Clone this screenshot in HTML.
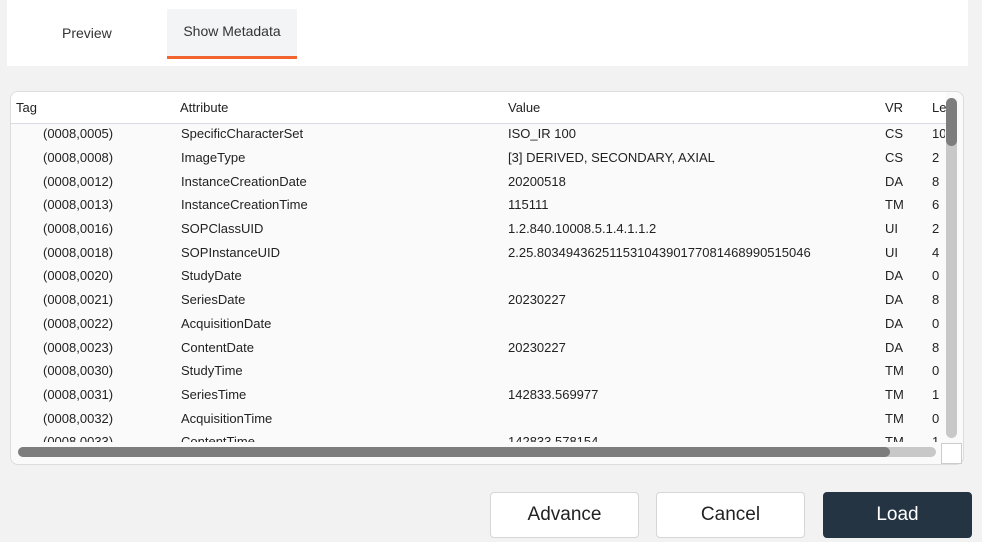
<!DOCTYPE html>
<html><head><style>
*{box-sizing:border-box;margin:0;padding:0}
body{width:982px;height:542px;background:#f2f2f2;font-family:"Liberation Sans",sans-serif;color:#222;position:relative;overflow:hidden}
.top{position:absolute;left:7px;top:0;width:961px;height:66px;background:#fff}
.tab{position:absolute;font-size:14px;color:#333}
.sm{left:160px;top:9px;width:130px;height:50px;background:#f3f4f6;border-bottom:3px solid #f26430;text-align:center;line-height:44px}
.box{position:absolute;left:10px;top:91px;width:954px;height:374px;background:#fafafa;border:1px solid #dcdcdc;border-radius:8px;overflow:hidden}
.hdr{position:absolute;left:0;top:0;width:935px;height:32px;background:#fff;border-bottom:1px solid #d8dce2}
.c{position:absolute;font-size:13px;white-space:nowrap}
.vs{position:absolute;left:935px;top:6px;width:11px;height:340px;background:#c8c8c8;border-radius:6px}
.vt{position:absolute;left:0;top:0;width:11px;height:48px;background:#7d7d7d;border-radius:6px}
.hs{position:absolute;left:7px;top:355px;width:918px;height:10px;background:#c8c8c8;border-radius:6px}
.ht{position:absolute;left:0;top:0;width:872px;height:10px;background:#7d7d7d;border-radius:6px}
.corner{position:absolute;left:930px;top:351px;width:21px;height:21px;background:#fff;border:1px solid #ccc}
.btn{position:absolute;top:492px;width:149px;height:46px;border-radius:4px;border:1px solid #d6d6d6;background:#fff;font-size:19px;text-align:center;line-height:44px;color:#222}
</style></head><body>
<div class="top">
<div class="tab" style="left:55px;top:25px">Preview</div>
<div class="tab sm">Show Metadata</div>
</div>
<div class="box">
<div class="hdr">
<div class="c" style="left:5px;top:8px">Tag</div>
<div class="c" style="left:169px;top:8px">Attribute</div>
<div class="c" style="left:497px;top:8px">Value</div>
<div class="c" style="left:874px;top:8px">VR</div>
<div class="c" style="left:921px;top:8px">Le</div>
</div>
<div class="vs"><div class="vt"></div></div>
</div>
<div style="position:absolute;left:11px;top:124px;width:934px;height:318px;overflow:hidden">
<div style="position:relative">
<div class="c" style="left:32px;top:2px">(0008,0005)</div><div class="c" style="left:170px;top:2px">SpecificCharacterSet</div><div class="c" style="left:497px;top:2px">ISO_IR 100</div><div class="c" style="left:874px;top:2px">CS</div><div class="c" style="left:921px;top:2px">10</div>
<div class="c" style="left:32px;top:26px">(0008,0008)</div><div class="c" style="left:170px;top:26px">ImageType</div><div class="c" style="left:497px;top:26px">[3] DERIVED, SECONDARY, AXIAL</div><div class="c" style="left:874px;top:26px">CS</div><div class="c" style="left:921px;top:26px">2</div>
<div class="c" style="left:32px;top:50px">(0008,0012)</div><div class="c" style="left:170px;top:50px">InstanceCreationDate</div><div class="c" style="left:497px;top:50px">20200518</div><div class="c" style="left:874px;top:50px">DA</div><div class="c" style="left:921px;top:50px">8</div>
<div class="c" style="left:32px;top:73px">(0008,0013)</div><div class="c" style="left:170px;top:73px">InstanceCreationTime</div><div class="c" style="left:497px;top:73px">115111</div><div class="c" style="left:874px;top:73px">TM</div><div class="c" style="left:921px;top:73px">6</div>
<div class="c" style="left:32px;top:97px">(0008,0016)</div><div class="c" style="left:170px;top:97px">SOPClassUID</div><div class="c" style="left:497px;top:97px">1.2.840.10008.5.1.4.1.1.2</div><div class="c" style="left:874px;top:97px">UI</div><div class="c" style="left:921px;top:97px">2</div>
<div class="c" style="left:32px;top:121px">(0008,0018)</div><div class="c" style="left:170px;top:121px">SOPInstanceUID</div><div class="c" style="left:497px;top:121px">2.25.80349436251153104390177081468990515046</div><div class="c" style="left:874px;top:121px">UI</div><div class="c" style="left:921px;top:121px">4</div>
<div class="c" style="left:32px;top:144px">(0008,0020)</div><div class="c" style="left:170px;top:144px">StudyDate</div><div class="c" style="left:874px;top:144px">DA</div><div class="c" style="left:921px;top:144px">0</div>
<div class="c" style="left:32px;top:168px">(0008,0021)</div><div class="c" style="left:170px;top:168px">SeriesDate</div><div class="c" style="left:497px;top:168px">20230227</div><div class="c" style="left:874px;top:168px">DA</div><div class="c" style="left:921px;top:168px">8</div>
<div class="c" style="left:32px;top:192px">(0008,0022)</div><div class="c" style="left:170px;top:192px">AcquisitionDate</div><div class="c" style="left:874px;top:192px">DA</div><div class="c" style="left:921px;top:192px">0</div>
<div class="c" style="left:32px;top:216px">(0008,0023)</div><div class="c" style="left:170px;top:216px">ContentDate</div><div class="c" style="left:497px;top:216px">20230227</div><div class="c" style="left:874px;top:216px">DA</div><div class="c" style="left:921px;top:216px">8</div>
<div class="c" style="left:32px;top:239px">(0008,0030)</div><div class="c" style="left:170px;top:239px">StudyTime</div><div class="c" style="left:874px;top:239px">TM</div><div class="c" style="left:921px;top:239px">0</div>
<div class="c" style="left:32px;top:263px">(0008,0031)</div><div class="c" style="left:170px;top:263px">SeriesTime</div><div class="c" style="left:497px;top:263px">142833.569977</div><div class="c" style="left:874px;top:263px">TM</div><div class="c" style="left:921px;top:263px">1</div>
<div class="c" style="left:32px;top:287px">(0008,0032)</div><div class="c" style="left:170px;top:287px">AcquisitionTime</div><div class="c" style="left:874px;top:287px">TM</div><div class="c" style="left:921px;top:287px">0</div>
<div class="c" style="left:32px;top:310px">(0008,0033)</div><div class="c" style="left:170px;top:310px">ContentTime</div><div class="c" style="left:497px;top:310px">142833.578154</div><div class="c" style="left:874px;top:310px">TM</div><div class="c" style="left:921px;top:310px">1</div>
</div></div>
<div style="position:absolute;left:18px;top:447px;width:918px;height:10px;background:#c8c8c8;border-radius:6px"><div style="width:872px;height:10px;background:#7d7d7d;border-radius:6px"></div></div>
<div style="position:absolute;left:941px;top:443px;width:21px;height:21px;background:#fff;border:1px solid #ccc"></div>
<div class="btn" style="left:490px">Advance</div>
<div class="btn" style="left:656px">Cancel</div>
<div class="btn" style="left:823px;background:#243442;border-color:#243442;color:#fff">Load</div>
</body></html>
